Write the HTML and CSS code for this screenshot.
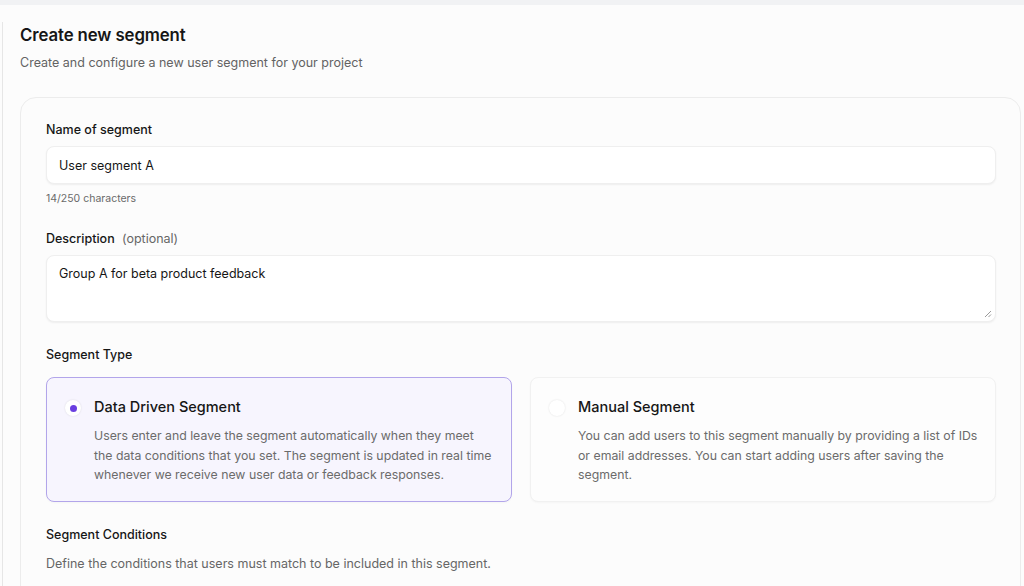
FILE: index.html
```html
<!DOCTYPE html>
<html lang="en">
<head>
    <meta charset="UTF-8">
    <meta name="viewport" content="width=device-width, initial-scale=1.0">
    <title>Create new segment</title>
    <link rel="stylesheet" href="styles.css">
</head>
<body>
    <div class="top-strip"></div>
    <div class="page">
        <div class="side-line"></div>
        <main class="content">
            <h1 class="page-title">Create new segment</h1>
            <p class="page-sub">Create and configure a new user segment for your project</p>

            <div class="card">
                <div class="field">
                    <label class="label">Name of segment</label>
                    <div class="input">User segment A</div>
                    <div class="hint">14/250 characters</div>
                </div>

                <div class="field">
                    <label class="label">Description <span class="optional">(optional)</span></label>
                    <div class="input textarea">
                        Group A for beta product feedback
                        <svg class="resize" width="8" height="8" viewBox="0 0 8 8">
                            <path d="M7 1L1 7M7 4.5L4.5 7" stroke="#9a9a9a" stroke-width="1" fill="none"/>
                        </svg>
                    </div>
                </div>

                <div class="field">
                    <label class="label">Segment Type</label>
                    <div class="type-grid">
                        <div class="type-card selected">
                            <span class="radio on"></span>
                            <div>
                                <div class="type-title">Data Driven Segment</div>
                                <div class="type-desc">Users enter and leave the segment automatically when they meet the data conditions that you set. The segment is updated in real time whenever we receive new user data or feedback responses.</div>
                            </div>
                        </div>
                        <div class="type-card">
                            <span class="radio"></span>
                            <div>
                                <div class="type-title">Manual Segment</div>
                                <div class="type-desc">You can add users to this segment manually by providing a list of IDs or email addresses. You can start adding users after saving the segment.</div>
                            </div>
                        </div>
                    </div>
                </div>

                <div class="field">
                    <label class="label">Segment Conditions</label>
                    <p class="cond-desc">Define the conditions that users must match to be included in this segment.</p>
                </div>
            </div>
        </main>
    </div>
</body>
</html>
```

FILE: styles.css
```css
html, body {
    margin: 0;
    height: 100%;
    overflow: hidden;
    font-family: Inter, 'Noto Sans', sans-serif;
    background-color: #fcfcfc;
    color: #161616;
}

.top-strip {
    height: 5px;
    background-color: #f1f2f4;
}

.page {
    display: flex;
}

.side-line {
    width: 1px;
    margin-left: 2px;
    margin-top: 17px;
    height: 600px;
    background-color: #e6e6e6;
}

.content {
    flex: 1;
    padding: 19px 3px 0 17px;
}

.page-title {
    margin: 0;
    font-size: 16.8px;
    font-weight: 600;
    line-height: 22px;
    letter-spacing: -0.1px;
}

.page-sub {
    margin: 9px 0 0;
    font-size: 12.5px;
    line-height: 16px;
    color: #636363;
}

.card {
    margin-top: 26px;
    border: 1px solid #ececec;
    border-radius: 16px;
    background-color: #fcfcfc;
    padding: 24px 24px 0 25px;
    height: 600px;
}

.field {
    margin-bottom: 25px;
}

.label {
    display: block;
    font-size: 12.5px;
    font-weight: 500;
    line-height: 16px;
    margin-bottom: 8px;
}

.optional {
    font-weight: 400;
    color: #666;
    margin-left: 4px;
}

.input {
    position: relative;
    height: 38px;
    box-sizing: border-box;
    padding: 10px 12px;
    font-size: 12.5px;
    line-height: 17px;
    background-color: #fff;
    border: 1px solid #efefef;
    border-radius: 8px;
    box-shadow: 0 1px 2px rgba(0, 0, 0, 0.06);
}

.textarea {
    height: 67px;
    padding-top: 9px;
}

.resize {
    position: absolute;
    right: 3px;
    bottom: 3px;
}

.hint {
    margin-top: 8px;
    font-size: 10.5px;
    color: #6a6a6a;
    line-height: 14px;
}

.type-grid {
    display: grid;
    grid-template-columns: 1fr 1fr;
    gap: 18px;
    margin-top: 14px;
}

.type-card {
    display: flex;
    gap: 13px;
    padding: 19px 12px 16px 18px;
    border: 1.5px solid #f1f1f1;
    border-radius: 8px;
    background-color: #fdfdfd;
    box-shadow: 0 1px 2px rgba(0, 0, 0, 0.03);
}

.type-card.selected {
    border-color: #b2a5ea;
    background-color: #f7f5fe;
    padding-right: 17px;
}

.radio {
    flex: none;
    width: 16px;
    height: 16px;
    margin-top: 3px;
    border-radius: 50%;
    background-color: #fff;
    box-shadow: 0 0 2px rgba(0, 0, 0, 0.12);
    position: relative;
}

.radio.on::after {
    content: '';
    position: absolute;
    left: 5px;
    top: 5px;
    width: 7px;
    height: 7px;
    border-radius: 50%;
    background-color: #6a3fe0;
}

.type-title {
    font-size: 14.5px;
    font-weight: 500;
    line-height: 20px;
    margin-bottom: 9px;
}

.type-desc {
    font-size: 12.3px;
    line-height: 19.5px;
    color: #6b6b6b;
}

.cond-desc {
    margin: 13px 0 0;
    font-size: 12.5px;
    line-height: 16px;
    color: #666;
}
```
